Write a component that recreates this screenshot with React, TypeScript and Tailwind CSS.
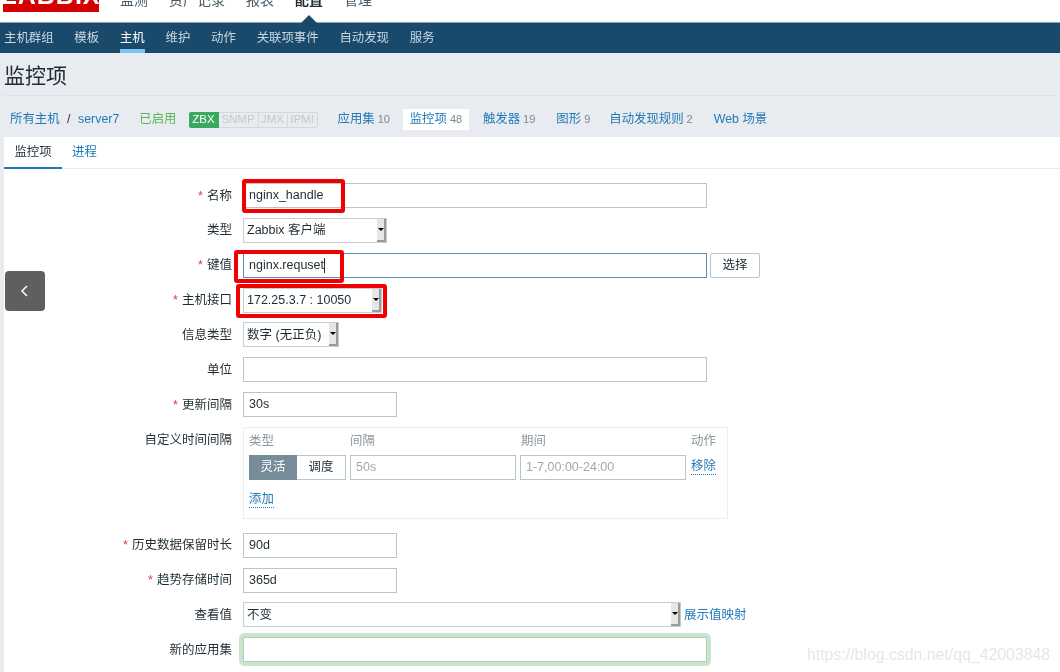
const font = { fontFamily: '"Liberation Sans", "Noto Sans CJK SC", sans-serif' };

function Row({ label, required, children, className = "" }: { label: string; required?: boolean; children: React.ReactNode; className?: string }) {
  return (
    <div className={`flex gap-[11px] ${className}`}>
      <div className="w-[228px] shrink-0 h-[24px] pt-[2px] flex items-center justify-end text-[12.5px] text-[#1f2c33]">
        {required && <span className="text-[#e33734] mr-[4px]">*</span>}
        {label}
      </div>
      {children}
    </div>
  );
}

function Input({ value, width, focused, muted }: { value?: string; width: string; focused?: boolean; muted?: boolean }) {
  return (
    <div
      className={`${width} h-[25px] border ${focused ? "border-[#5b8fb5]" : "border-[#b9c5cc]"} bg-white px-[5px] flex items-center text-[12.5px] ${muted ? "text-[#a0a8ad]" : "text-[#1f2c33]"}`}
    >
      {value}
      {focused && <span className="w-[1px] h-[15px] bg-[#1f2c33]" />}
    </div>
  );
}

function Select({ value, width }: { value: string; width: string }) {
  return (
    <div className={`${width} h-[25px] border border-[#c3ced4] bg-white pl-[3px] flex items-center justify-between text-[12.5px] text-[#1f2c33]`}>
      <span className="pt-[1px]">{value}</span>
      <div className="w-[9px] h-[23px] bg-[#e6e6e6] border-r-2 border-b-2 border-[#9a9a9a] flex items-center justify-center">
        <div className="w-0 h-0 border-x-[3px] border-x-transparent border-t-[3px] border-t-black" />
      </div>
    </div>
  );
}

function Count({ label, n, className = "" }: { label: string; n?: string; className?: string }) {
  return (
    <span className={`whitespace-nowrap ${className}`}>
      <span className="text-[#1f7ab8]">{label}</span>
      {n && <span className="text-[#7b8a92] text-[11px] ml-[3px]">{n}</span>}
    </span>
  );
}

export default function App() {
  const nav = ["主机群组", "模板", "主机", "维护", "动作", "关联项事件", "自动发现", "服务"];

  return (
    <div className="relative w-[1060px] h-[672px] overflow-hidden bg-[#e8ebf0] blur-[0.3px]" style={font}>
      {/* top menu */}
      <div className="relative h-[23px] bg-white border-b border-[#8ea3b0] flex items-start overflow-hidden">
        <div className="w-[96px] h-[34px] -mt-[22px] ml-[3px] bg-[#d40000] text-white text-[25px] font-semibold tracking-[1px] flex items-center justify-center leading-none">
          ZABBIX
        </div>
        <div className="flex gap-[21px] ml-[21px] -mt-[9px] text-[14px] text-[#4a5a64] leading-[18px]">
          <span>监测</span>
          <span>资产记录</span>
          <span>报表</span>
          <span className="font-bold text-[#1f2c33]">配置</span>
          <span>管理</span>
        </div>
      </div>
      <div className="absolute left-[301px] top-[15px] w-0 h-0 border-x-[8px] border-x-transparent border-b-[8px] border-b-[#1a4a6b]" />

      {/* sub menu */}
      <div className="h-[30px] bg-[#1a4a6b] flex gap-[20.8px] pl-[4px] text-[12.4px] text-[#c8d6df]">
        {nav.map((item) => (
          <div
            key={item}
            className={`h-[30px] flex items-center border-b-[4px] pt-[4px] ${item === "主机" ? "border-[#7cc4f4] text-white" : "border-transparent"}`}
          >
            {item}
          </div>
        ))}
      </div>

      {/* title */}
      <div className="mx-[4px] h-[43px] flex items-center border-b border-[#dfe3e8] text-[21px] text-[#1f2c33] pt-[4px]">监控项</div>

      {/* breadcrumbs */}
      <div className="h-[41px] flex items-center pl-[10px] pt-[6px] text-[12.4px]">
        <span className="text-[#1f7ab8]">所有主机</span>
        <span className="mx-[7.5px] text-[#1f2c33]">/</span>
        <span className="text-[#1f7ab8]">server7</span>
        <span className="ml-[20px] text-[#5cb85c]">已启用</span>
        <div className="ml-[12px] flex h-[16px] text-[11.5px] leading-none">
          <span className="w-[30px] bg-[#3aa95f] text-white flex items-center justify-center rounded-l-[2px]">ZBX</span>
          <span className="w-[40px] border-y border-r border-[#d5d9dc] text-[#c3c9cd] flex items-center justify-center">SNMP</span>
          <span className="w-[29px] border-y border-r border-[#d5d9dc] text-[#c3c9cd] flex items-center justify-center">JMX</span>
          <span className="w-[30px] border-y border-r border-[#d5d9dc] text-[#c3c9cd] flex items-center justify-center rounded-r-[2px]">IPMI</span>
        </div>
        <Count label="应用集" n="10" className="ml-[20px]" />
        <div className="ml-[13px] w-[66px] h-[21px] bg-white flex items-center justify-center">
          <Count label="监控项" n="48" />
        </div>
        <Count label="触发器" n="19" className="ml-[14px]" />
        <Count label="图形" n="9" className="ml-[21px]" />
        <Count label="自动发现规则" n="2" className="ml-[19px]" />
        <Count label="Web 场景" className="ml-[21px]" />
      </div>

      {/* card */}
      <div className="ml-[4px] h-[535px] bg-white">
        <div className="h-[32px] border-b border-[#ebeef0] flex text-[12.4px]">
          <div className="w-[58px] h-[32px] border-b-2 border-[#1f7ab8] flex items-center justify-center text-[#1f2c33]">监控项</div>
          <div className="ml-[10px] h-[30px] flex items-center text-[#1f7ab8]">进程</div>
        </div>

        <div className="pt-[14px] flex flex-col gap-[9.85px]">
          <Row label="名称" required>
            <Input value="nginx_handle" width="w-[464px]" />
          </Row>
          <Row label="类型">
            <Select value="Zabbix 客户端" width="w-[144px]" />
          </Row>
          <Row label="键值" required>
            <Input value="nginx.requset" width="w-[464px]" focused />
            <div className="-ml-[8px] w-[50px] h-[25px] border border-[#b9c5cc] rounded-[2px] bg-white flex items-center justify-center text-[12.5px] text-[#1f2c33]">选择</div>
          </Row>
          <Row label="主机接口" required>
            <Select value="172.25.3.7 : 10050" width="w-[139px]" />
          </Row>
          <Row label="信息类型">
            <Select value="数字 (无正负)" width="w-[96px]" />
          </Row>
          <Row label="单位">
            <Input width="w-[464px]" />
          </Row>
          <Row label="更新间隔" required>
            <Input value="30s" width="w-[154px]" />
          </Row>
          <Row label="自定义时间间隔" className="mb-[4px]">
            <div className="w-[485px] h-[92px] border border-[#ebeef0] px-[5px] pt-[6px] text-[12.4px]">
              <div className="flex text-[#8a979e] h-[15px] items-center">
                <span className="w-[101px]">类型</span>
                <span className="w-[171px]">间隔</span>
                <span className="w-[170px]">期间</span>
                <span>动作</span>
              </div>
              <div className="flex mt-[6px] gap-[4px] items-center">
                <div className="flex w-[97px] h-[25px] shrink-0">
                  <span className="w-[48px] bg-[#768d99] text-white flex items-center justify-center">灵活</span>
                  <span className="w-[49px] border border-l-0 border-[#b9c5cc] text-[#1f2c33] flex items-center justify-center">调度</span>
                </div>
                <Input value="50s" width="w-[166px]" muted />
                <Input value="1-7,00:00-24:00" width="w-[166px]" muted />
                <span className="ml-[1px] text-[#1f7ab8] border-b border-dotted border-[#1f7ab8] leading-[15px]">移除</span>
              </div>
              <span className="inline-block mt-[12px] text-[#1f7ab8] border-b border-dotted border-[#1f7ab8] leading-[15px]">添加</span>
            </div>
          </Row>
          <Row label="历史数据保留时长" required>
            <Input value="90d" width="w-[154px]" />
          </Row>
          <Row label="趋势存储时间" required>
            <Input value="365d" width="w-[154px]" />
          </Row>
          <Row label="查看值">
            <div className="flex items-center gap-[3px]">
              <Select value="不变" width="w-[438px]" />
              <span className="text-[12.5px] text-[#1f7ab8]">展示值映射</span>
            </div>
          </Row>
          <Row label="新的应用集">
            <div className="rounded-[2px] ring-4 ring-[#c8e6c9]">
              <Input width="w-[464px]" />
            </div>
          </Row>
        </div>
      </div>

      {/* red annotation boxes */}
      <div className="absolute left-[242px] top-[179px] w-[103px] h-[34px] border-[4px] border-[#f00000] rounded-[3px]" />
      <div className="absolute left-[234px] top-[250px] w-[110px] h-[33px] border-[4px] border-[#f00000] rounded-[3px]" />
      <div className="absolute left-[236px] top-[284px] w-[151px] h-[34px] border-[4px] border-[#f00000] rounded-[3px]" />

      {/* collapse button */}
      <div className="absolute left-[5px] top-[271px] w-[40px] h-[40px] rounded-[4px] bg-[#5f5f5f] flex items-center justify-center">
        <svg width="14" height="14" viewBox="0 0 14 14" fill="none" stroke="#fff" strokeWidth="1.5">
          <path d="M9 2 L4 7 L9 12" />
        </svg>
      </div>

      {/* watermark */}
      <div className="absolute left-[807px] top-[643px] text-[15.85px] text-[#e6e6e6] whitespace-nowrap">https://blog.csdn.net/qq_42003848</div>
    </div>
  );
}
